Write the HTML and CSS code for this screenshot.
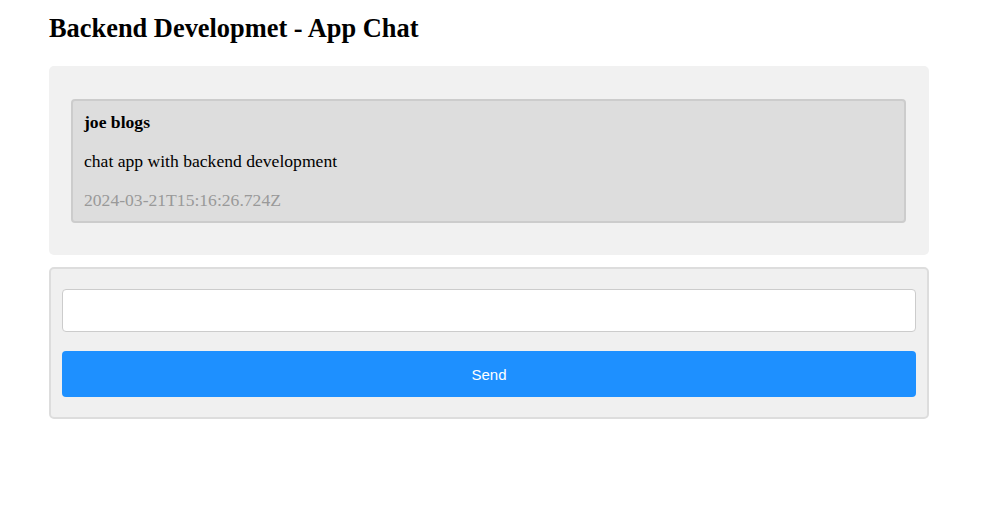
FILE: index.html
```html
<!DOCTYPE html>
<html>
<head>
<meta charset="utf-8">
<title>App Chat</title>
<link rel="stylesheet" href="styles.css">
</head>
<body>
<div class="page">
  <h2 class="title">Backend Developmet - App Chat</h2>
  <div class="chat-box">
    <div class="message">
      <p class="author">joe blogs</p>
      <p class="text">chat app with backend development</p>
      <p class="time">2024-03-21T15:16:26.724Z</p>
    </div>
  </div>
  <form class="send-form">
    <input class="msg-input" type="text">
    <button class="send-btn" type="button">Send</button>
  </form>
</div>
</body>
</html>
```

FILE: styles.css
```css
html, body {
  margin: 0;
  padding: 0;
  background: #ffffff;
}
body {
  font-family: "Liberation Serif", "Times New Roman", serif;
  font-size: 17.6px;
  color: #000;
}
.page {
  width: 880px;
  padding-left: 49px;
  display: flex;
  flex-direction: column;
}
.title {
  font-size: 26.4px;
  font-weight: bold;
  margin: 13px 0 23px 0;
  line-height: 30px;
}
.chat-box {
  background: #f1f1f1;
  border-radius: 5px;
  padding: 33px 23px 32px 22px;
}
.message {
  background: #dddddd;
  border: 2px solid #cccccc;
  border-radius: 4px;
  padding: 11px 11px 11px 11px;
  box-sizing: border-box;
  height: 124px;
}
.message p {
  margin: 0;
  line-height: 20px;
}
.author {
  font-weight: bold;
}
.message .text {
  margin-top: 19px;
}
.message .time {
  color: #999999;
  margin-top: 19px;
}
.send-form {
  margin: 12px 0 0 0;
  background: #f0f0f0;
  border: 2px solid #dddddd;
  border-radius: 5px;
  padding: 20px 11px 20px 11px;
  display: flex;
  flex-direction: column;
  gap: 19px;
}
.msg-input {
  height: 43px;
  box-sizing: border-box;
  border: 1px solid #cccccc;
  border-radius: 4px;
  background: #ffffff;
  margin: 0;
  padding: 0 10px;
}
.send-btn {
  height: 46px;
  border: none;
  border-radius: 4px;
  background: #1e90ff;
  color: #ffffff;
  font-family: "Liberation Sans", Arial, sans-serif;
  font-size: 15px;
  margin: 0;
  cursor: pointer;
}
```
